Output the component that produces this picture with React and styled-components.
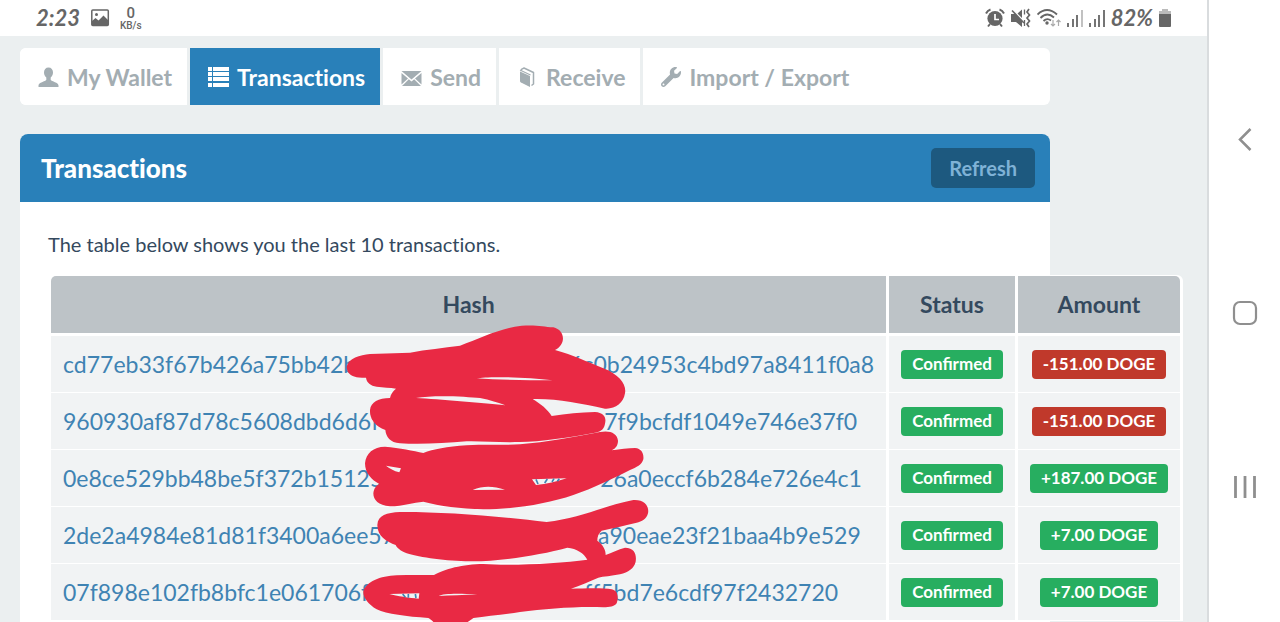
import React from 'react'
import styled, { createGlobalStyle } from 'styled-components'
import { FaWrench } from 'react-icons/fa'

const GlobalStyle = createGlobalStyle`
    * {
        box-sizing: border-box;
    }

    body {
        margin: 0;
        background: #ebeff0;
        font-family: Lato, 'Liberation Sans', sans-serif;
        font-variant-ligatures: none;
        color: #34495e;
        overflow: hidden;
    }
`;

const Screen = styled.div`
    display: flex;
    height: 100vh;
    overflow: hidden;
`;

const Main = styled.div`
    flex: 1;
    min-width: 0;
    display: flex;
    flex-direction: column;
`;

const StatusBar = styled.header`
    flex: none;
    display: flex;
    align-items: center;
    justify-content: space-between;
    height: 36px;
    padding: 0 36px;
    background: #fff;
    color: #666;
`;

const StatusGroup = styled.div`
    display: flex;
    align-items: center;
    gap: ${({ $gap }) => $gap}px;
`;

const StatusText = styled.span`
    font-size: 22px;
    line-height: 24px;
    font-style: italic;
    font-weight: 700;
`;

const Speed = styled.span`
    display: flex;
    flex-direction: column;
    align-items: center;
    font-family: Roboto, sans-serif;
    font-size: 15px;
    line-height: 16px;
    font-weight: 500;
`;

const SpeedUnit = styled.span`
    font-size: 10px;
    line-height: 10px;
`;

const Content = styled.main`
    flex: 1;
    display: flex;
    flex-direction: column;
    gap: 29px;
    padding: 12px 157px 0 20px;
`;

const Tabs = styled.nav`
    flex: none;
    display: flex;
    height: 57px;
    background: #fff;
    border-radius: 6px;
    overflow: hidden;
`;

const Tab = styled.a`
    display: flex;
    align-items: center;
    gap: 8px;
    padding: 0 15px 0 18px;
    border-right: ${({ $last }) => ($last ? 'none' : '3px solid #ebeff0')};
    background: ${({ $active }) => ($active ? '#2980b9' : '#fff')};
    background-clip: padding-box;
    color: ${({ $active }) => ($active ? '#fff' : '#a3adb2')};
    font-size: 23px;
    line-height: 28px;
    font-weight: 700;
    text-decoration: none;
    white-space: nowrap;
`;

const Card = styled.section`
    flex: 1;
    background: #fff;
    border-radius: 8px 8px 0 0;
`;

const CardHeader = styled.div`
    display: flex;
    align-items: center;
    justify-content: space-between;
    height: 68px;
    padding: 0 15px 0 21px;
    border-radius: 8px 8px 0 0;
    background: #2980b9;
`;

const CardTitle = styled.h1`
    margin: 0;
    color: #fff;
    font-size: 26px;
    line-height: 32px;
    font-weight: 900;
`;

const RefreshButton = styled.button`
    height: 40px;
    padding: 0 18px;
    border: 0;
    border-radius: 5px;
    background: #1d597f;
    color: #7fb2d6;
    font-family: inherit;
    font-size: 20px;
    font-weight: 700;
    cursor: pointer;
`;

const CardBody = styled.div`
    padding: 28px;
`;

const Intro = styled.p`
    margin: 0 0 17px;
    font-size: 20px;
    line-height: 28px;
`;

const TableWrap = styled.div`
    position: relative;
    width: max-content;
`;

const Table = styled.table`
    border-collapse: separate;
    border-spacing: 3px 1px;
    border-radius: 6px 6px 0 0;
    background: #fff;
    white-space: nowrap;
`;

const HeadCell = styled.th`
    height: 59px;
    padding: 0 12px 2px;
    border-bottom: 2px solid #fff;
    background: #bdc3c7;
    background-clip: padding-box;
    font-size: 23px;
    line-height: 30px;
    font-weight: 700;

    &:first-child {
        border-top-left-radius: 5px;
    }

    &:last-child {
        border-top-right-radius: 5px;
    }
`;

const Cell = styled.td`
    height: 56px;
    padding: 0 12px;
    background: #f1f3f4;
    text-align: center;
`;

const HashLink = styled.a`
    display: flex;
    color: #3f83b3;
    font-size: 23px;
    line-height: 30px;
    text-decoration: none;
`;

const Hidden = styled.span`
    width: ${({ $width }) => $width}px;
`;

const Badge = styled.span`
    display: inline-block;
    padding: 0 11px 2px;
    border-radius: 4px;
    background: ${({ $negative }) => ($negative ? '#c0392b' : '#27ae60')};
    color: #fff;
    font-size: 17px;
    line-height: 27px;
    font-weight: 700;
    font-variant-ligatures: normal;
`;

// marker strokes lie over the middle of the hash column
const Marker = styled.svg`
    position: absolute;
    left: 292px;
    top: 45px;
    width: 330px;
    height: 304px;
    pointer-events: none;
`;

const NavRail = styled.aside`
    flex: none;
    display: flex;
    flex-direction: column;
    align-items: center;
    justify-content: center;
    gap: 148px;
    width: 73px;
    padding-top: 4px;
    border-left: 2px solid #d9dcde;
    background: #fff;
`;

const NavButton = styled.button`
    display: flex;
    padding: 0;
    border: 0;
    background: none;
    color: #8f8f8f;
    cursor: pointer;
`;

const PictureIcon = () => (
    <svg width="20" height="18" viewBox="0 0 20 18">
        <rect x="1.800" y="1" width="16.500" height="15.500" rx="1" fill="none" stroke="currentColor" strokeWidth="1.500" />
        <circle cx="6.500" cy="5.500" r="1.500" fill="currentColor" />
        <path d="M2 16V12l3.500-3 3 2.500 5-5 4.500 4.500v5z" fill="currentColor" />
    </svg>
)

const AlarmIcon = () => (
    <svg width="20" height="20" viewBox="0 0 20 20">
        <circle cx="10" cy="10.500" r="7.600" fill="currentColor" />
        <path d="M1 5.500Q2.500 2.500 5.500 1.500M19 5.500Q17.500 2.500 14.500 1.500M5 16l-2 2.500M15 16l2 2.500" stroke="currentColor" strokeWidth="2" fill="none" />
        <path d="M10 6v5.500h4" stroke="#fff" strokeWidth="1.700" fill="none" />
    </svg>
)

const MuteIcon = () => (
    <svg width="20" height="20" viewBox="0 0 20 20">
        <path d="M0 6h4l7 7v6l-6-5H0zM6.500 5.500L11 1.500v8.500z" fill="currentColor" />
        <path d="M1 2.500l12 12.500" stroke="currentColor" strokeWidth="1.600" />
        <path d="M13.500 1.500v5M13.500 12v6" stroke="currentColor" strokeWidth="1.300" />
        <path d="M18 1l-2 3 2.500 3-2.500 3 2.500 3-2.500 3 2 3" stroke="currentColor" strokeWidth="1.700" fill="none" />
    </svg>
)

const WifiIcon = () => (
    <svg width="24" height="20" viewBox="0 0 24 20">
        <path d="M0.500 6.500Q10 -2.500 20 6.500M3.500 10Q10 3.500 17 9.500M6.500 13Q10 9.500 14 12.500" stroke="currentColor" strokeWidth="1.900" fill="none" />
        <circle cx="10" cy="15" r="1.700" fill="currentColor" />
        <path d="M16 12v6M14 16l2 2 2-2M21.500 18v-6M19.500 14l2-2 2 2" stroke="#aaa" strokeWidth="1.200" fill="none" />
    </svg>
)

const SignalIcon = ({ weak }) => (
    <svg width="16" height="18" viewBox="0 0 16 18">
        <path d="M1 14v4M6 10v8M10 6v12" stroke="currentColor" strokeWidth="1.800" />
        <path d="M15 1v17" stroke={weak ? '#bbb' : 'currentColor'} strokeWidth="1.800" />
    </svg>
)

const BatteryIcon = () => (
    <svg width="12" height="18" viewBox="0 0 12 18">
        <path d="M3 0h6v2h3v3H0V2h3z" fill="#bbb" />
        <path d="M0 5h12v12q0 1-1 1H1q-1 0-1-1z" fill="currentColor" />
    </svg>
)

const UserIcon = () => (
    <svg width="21" height="21" viewBox="0 0 21 21">
        <path d="M10.500 1.500C7.700 1.500 6 3.600 6 6.300c0 2.300.8 4.100 2.300 5.300v2.500c-1 1.500-7.800 2.500-7.800 5.500V21h20v-1.400c0-3-6.800-4-7.800-5.500v-2.500c1.500-1.200 2.300-3 2.300-5.300 0-2.700-1.700-4.800-4.500-4.800z" fill="currentColor" />
    </svg>
)

const ListIcon = () => (
    <svg width="21" height="21" viewBox="0 0 21 21" fill="currentColor">
        {[1, 6, 11, 17].map(y => (
            <React.Fragment key={y}>
                <rect x="0" y={y} width="4" height="4" />
                <rect x="5" y={y} width="16" height="4" />
            </React.Fragment>
        ))}
    </svg>
)

const EnvelopeIcon = () => (
    <svg width="21" height="21" viewBox="0 0 21 21" fill="currentColor">
        <path d="M0.500 5h20L10.500 13.500zM0.500 7l6.500 5.500-6.500 6zM20.500 7l-6.500 5.500 6.500 6zM7.800 13.300l2.700 2.200 2.700-2.200 6.800 6.700H1z" />
    </svg>
)

const BookIcon = () => (
    <svg width="21" height="21" viewBox="0 0 21 21">
        <path d="M3 5.500l10 4.500V21L4 16.500Q3 16 3 15z" fill="currentColor" />
        <path d="M3.500 5Q4 3 7 2l9.500 4.500V18l-2 1.500" fill="none" stroke="currentColor" strokeWidth="1.500" strokeLinejoin="round" />
        <path d="M4 4.500l9.500 4.500" fill="none" stroke="currentColor" strokeWidth="1.200" />
    </svg>
)

const tabs = [
    { label: 'My Wallet', icon: <UserIcon /> },
    { label: 'Transactions', icon: <ListIcon />, active: true },
    { label: 'Send', icon: <EnvelopeIcon /> },
    { label: 'Receive', icon: <BookIcon /> },
    { label: 'Import / Export', icon: <FaWrench size={20} /> },
]

const transactions = [
    { head: 'cd77eb33f67b426a75bb42b', tail: '6c0b24953c4bd97a8411f0a8', hidden: 213, amount: '-151.00' },
    { head: '960930af87d78c5608dbd6d6f', tail: '7f9bcfdf1049e746e37f0', hidden: 225, amount: '-151.00' },
    { head: '0e8ce529bb48be5f372b15125', tail: '26a0eccf6b284e726e4c1', hidden: 217, amount: '+187.00' },
    { head: '2de2a4984e81d81f3400a6ee57', tail: 'a90eae23f21baa4b9e529', hidden: 203, amount: '+7.00' },
    { head: '07f898e102fb8bfc1e061706f', tail: 'ff5bd7e6cdf97f2432720', hidden: 215, amount: '+7.00' },
]

const MarkerStrokes = () => (
    <Marker viewBox="0 0 990 912" aria-hidden="true">
        <g fill="#e92944" fillRule="evenodd">
            <path d="M20 140C25 115 60 105 90 102L210 98C260 88 310 84 360 77C420 55 480 25 545 17C590 14 610 20 640 22C675 30 680 72 645 90C700 105 740 125 790 145C840 165 860 195 855 220C850 250 825 268 795 266C720 250 650 235 578 237C600 250 625 270 635 288C680 282 720 277 765 276C790 278 798 290 796 305C794 325 785 335 765 338C690 352 600 365 540 366C480 368 430 363 380 364C310 370 240 374 180 370C150 368 138 350 136 330C105 320 88 295 90 270C93 245 115 235 150 234C152 222 160 212 168 206C150 203 130 202 110 200C92 197 80 188 78 173C60 173 50 172 45 170C25 165 20 150 20 140Z
                M408 175C450 168 560 172 638 181C560 181 480 180 408 175Z
                M228 234C280 224 380 230 420 234C450 240 475 248 496 256C420 248 300 238 228 234Z" />
            <path d="M75 430C78 400 100 380 135 380C180 384 220 392 250 399C280 388 320 380 380 376C440 372 500 376 540 373C620 366 700 352 780 336C810 330 832 340 834 362C834 375 828 385 815 391C840 388 865 384 885 384C905 386 912 400 910 418C905 435 890 442 870 450C820 475 760 505 700 525C620 552 520 568 430 568C360 566 300 558 250 545C220 548 190 558 150 559C115 556 100 540 100 520C102 505 108 497 118 492C95 480 75 460 75 430Z
                M138 437L183 445L178 457C162 453 148 445 138 437Z
                M398 510C430 496 460 498 495 509Z
                M576 478L680 475C650 485 620 492 588 495Z" />
            <path d="M112 615C114 585 140 578 180 576C300 575 480 588 620 606C720 595 800 555 880 540C915 538 928 560 924 580C920 598 905 605 890 608C850 618 815 625 785 632C775 640 772 650 772 662C790 675 797 690 797 705C815 698 835 688 855 683C885 683 890 705 887 725C882 745 865 757 840 763C815 768 790 770 775 773C750 783 720 797 693 806C740 805 790 803 815 808C835 812 836 835 830 850C822 860 810 862 790 862C720 858 620 866 540 876C490 884 440 888 400 894C390 902 380 906 378 912L285 912C278 902 272 898 265 894C200 890 140 882 110 868C85 852 70 835 70 815C78 785 120 768 170 766C210 764 250 765 282 765C310 748 370 732 430 732C520 738 660 730 742 719C732 700 710 685 682 683C600 705 480 725 390 724C320 724 240 712 200 700C180 692 170 682 167 675C140 665 112 650 112 615Z
                M148 822L238 820L236 836C210 834 170 828 148 822Z
                M296 828C310 820 360 820 412 824C370 824 330 826 296 828Z" />
        </g>
        <path d="M588 478l6 14M622 477l-8 12M642 476l-6 10M658 476l-6 8M188 822l8 10M205 822v11M226 822l2 12" stroke="#3f83b3" strokeWidth="5" fill="none" />
    </Marker>
)

const App = () => {
    return (
        <Screen>
            <GlobalStyle />
            <Main>
                <StatusBar>
                    <StatusGroup $gap={10}>
                        <StatusText>2:23</StatusText>
                        <PictureIcon />
                        <Speed>0<SpeedUnit>KB/s</SpeedUnit></Speed>
                    </StatusGroup>
                    <StatusGroup $gap={6}>
                        <AlarmIcon />
                        <MuteIcon />
                        <WifiIcon />
                        <SignalIcon weak />
                        <SignalIcon />
                        <StatusText>82%</StatusText>
                        <BatteryIcon />
                    </StatusGroup>
                </StatusBar>
                <Content>
                    <Tabs>
                        {tabs.map((tab, index) => (
                            <Tab href="#" key={tab.label} $active={tab.active} $last={index === tabs.length - 1}>
                                {tab.icon}
                                {tab.label}
                            </Tab>
                        ))}
                    </Tabs>
                    <Card>
                        <CardHeader>
                            <CardTitle>Transactions</CardTitle>
                            <RefreshButton>Refresh</RefreshButton>
                        </CardHeader>
                        <CardBody>
                            <Intro>The table below shows you the last 10 transactions.</Intro>
                            <TableWrap>
                                <Table>
                                    <thead>
                                        <tr>
                                            <HeadCell>Hash</HeadCell>
                                            <HeadCell>Status</HeadCell>
                                            <HeadCell>Amount</HeadCell>
                                        </tr>
                                    </thead>
                                    <tbody>
                                        {transactions.map(item => (
                                            <tr key={item.head}>
                                                <Cell>
                                                    <HashLink href="#">
                                                        {item.head}
                                                        <Hidden $width={item.hidden} />
                                                        {item.tail}
                                                    </HashLink>
                                                </Cell>
                                                <Cell><Badge>Confirmed</Badge></Cell>
                                                <Cell>
                                                    <Badge $negative={item.amount.startsWith('-')}>{item.amount} DOGE</Badge>
                                                </Cell>
                                            </tr>
                                        ))}
                                    </tbody>
                                </Table>
                                <MarkerStrokes />
                            </TableWrap>
                        </CardBody>
                    </Card>
                </Content>
            </Main>
            <NavRail>
                <NavButton aria-label="Back">
                    <svg width="26" height="26" viewBox="0 0 26 26">
                        <path d="M18.500 3L8 13.500 18.500 24" fill="none" stroke="currentColor" strokeWidth="2.500" />
                    </svg>
                </NavButton>
                <NavButton aria-label="Home">
                    <svg width="26" height="26" viewBox="0 0 26 26">
                        <rect x="2" y="2" width="22" height="22" rx="6" fill="none" stroke="currentColor" strokeWidth="2.200" />
                    </svg>
                </NavButton>
                <NavButton aria-label="Recent apps">
                    <svg width="26" height="26" viewBox="0 0 26 26">
                        <path d="M3.500 2v22M13 2v22M22.500 2v22" stroke="currentColor" strokeWidth="2.800" />
                    </svg>
                </NavButton>
            </NavRail>
        </Screen>
    )
}

export default App
